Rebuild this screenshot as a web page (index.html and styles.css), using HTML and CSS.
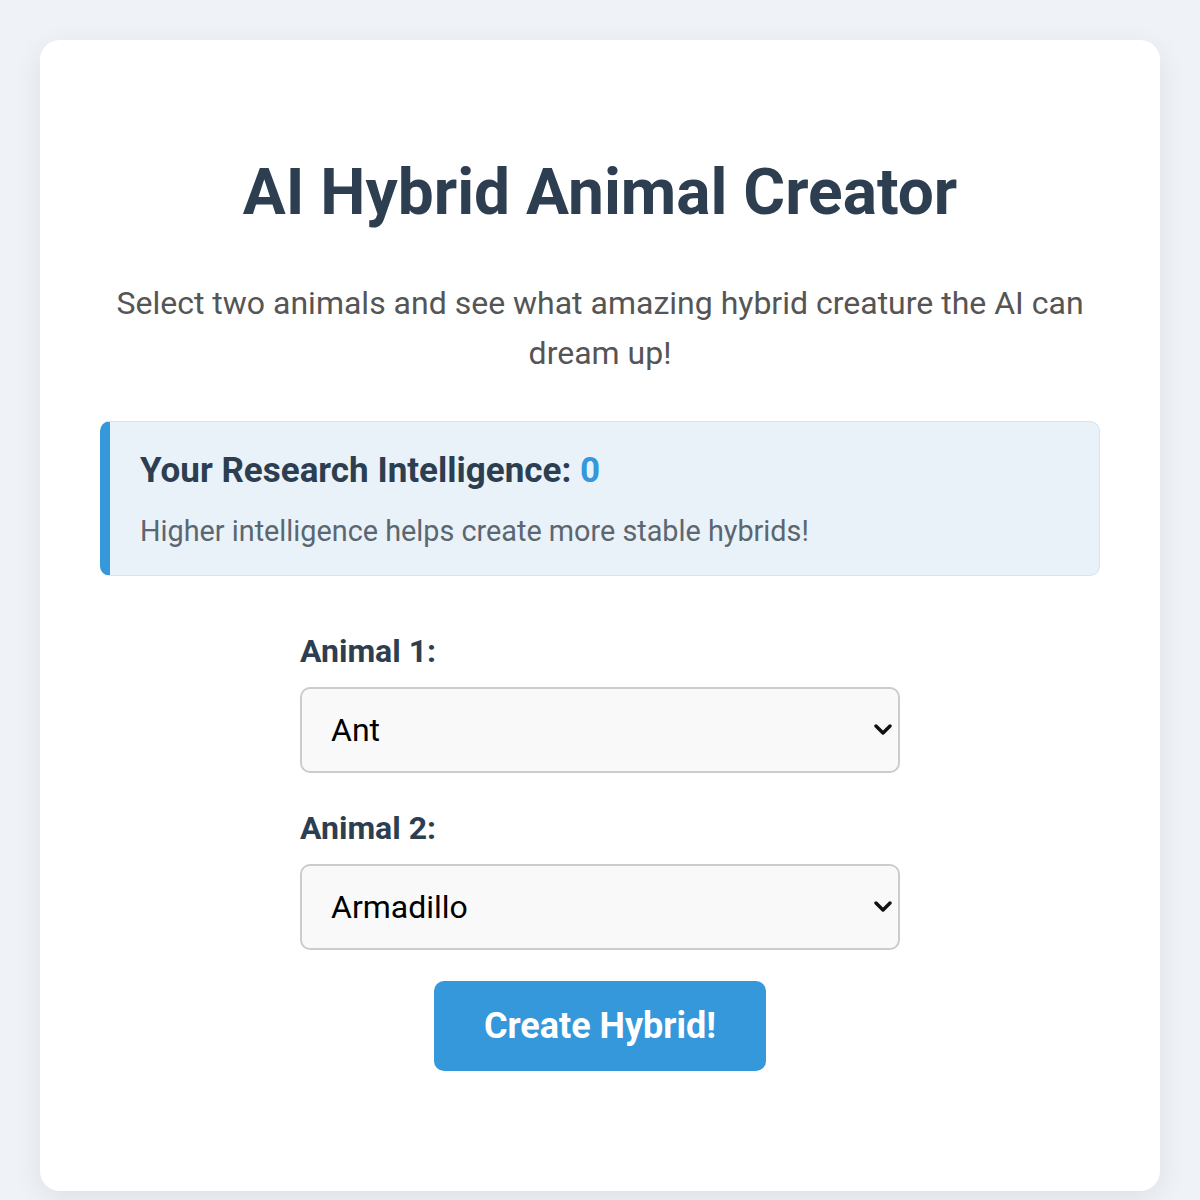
FILE: index.html
```html
<!DOCTYPE html>
<html lang="en">
<head>
  <meta charset="UTF-8">
  <title>AI Hybrid Animal Creator</title>
  <link rel="stylesheet" href="styles.css">
</head>
<body>

  <div class="card">
    <h1>AI Hybrid Animal Creator</h1>
    <p class="subtitle">Select two animals and see what amazing hybrid creature the AI can dream up!</p>

    <div class="intel-box">
      <h3>Your Research Intelligence: <span class="intel-value">0</span></h3>
      <p>Higher intelligence helps create more stable hybrids!</p>
    </div>

    <form id="hybridForm">
      <label for="animal1">Animal 1:</label>
      <div class="select-wrap">
        <select id="animal1">
          <option>Ant</option>
          <option>Armadillo</option>
          <option>Bear</option>
          <option>Cat</option>
        </select>
        <svg class="chevron" width="18" height="12" viewBox="0 0 18 12"><polyline points="2,2 9,9 16,2" fill="none" stroke="#111" stroke-width="3.4" stroke-linecap="round" stroke-linejoin="round"/></svg>
      </div>

      <label for="animal2">Animal 2:</label>
      <div class="select-wrap">
        <select id="animal2">
          <option>Ant</option>
          <option selected>Armadillo</option>
          <option>Bear</option>
          <option>Cat</option>
        </select>
        <svg class="chevron" width="18" height="12" viewBox="0 0 18 12"><polyline points="2,2 9,9 16,2" fill="none" stroke="#111" stroke-width="3.4" stroke-linecap="round" stroke-linejoin="round"/></svg>
      </div>

      <button type="submit">Create Hybrid!</button>
    </form>
  </div>

</body>
</html>
```

FILE: styles.css
```css
body {
  margin: 0;
  padding: 40px;
  font-family: Roboto, 'Liberation Sans', sans-serif;
  background-color: #eff3f7;
}

.card {
  background: #fff;
  border-radius: 20px;
  box-shadow: 0 8px 30px rgba(0,0,0,0.08);
  padding: 60px 60px 120px;
  text-align: center;
}

h1 {
  font-size: 64px;
  font-weight: 700;
  color: #2c3e50;
  margin: 55px 0 48px;
}

.subtitle {
  font-size: 32px;
  line-height: 50px;
  color: #555;
  margin: 0 0 43px;
}

.intel-box {
  text-align: left;
  background-color: #e9f2f9;
  border: 1px solid #d3e5f0;
  border-left: 10px solid #3498db;
  border-radius: 10px;
  padding: 28px 30px 27px;
}

.intel-box h3 {
  font-size: 35px;
  font-weight: 700;
  color: #2c3e50;
  margin: 0 0 23px;
}

.intel-value {
  color: #3498db;
}

.intel-box p {
  font-size: 28.8px;
  color: #5b6670;
  margin: 0;
}

form {
  width: 600px;
  margin: 56px auto 0;
  text-align: left;
}

form label {
  display: block;
  font-size: 32px;
  font-weight: 700;
  color: #2c3e50;
  margin-bottom: 17px;
}

.select-wrap {
  position: relative;
  margin-bottom: 36px;
}

.select-wrap:last-of-type {
  margin-bottom: 31px;
}

select {
  appearance: none;
  -webkit-appearance: none;
  width: 100%;
  height: 86px;
  padding: 0 29px;
  font-family: Roboto, 'Liberation Sans', sans-serif;
  font-size: 32px;
  color: #000;
  background-color: #f9f9f9;
  border: 2px solid #ccc;
  border-radius: 10px;
}

.chevron {
  position: absolute;
  right: 8px;
  top: 37px;
  pointer-events: none;
}

form button {
  display: block;
  margin: 0 auto;
  background-color: #3498db;
  color: #fff;
  border: none;
  border-radius: 10px;
  font-family: Roboto, 'Liberation Sans', sans-serif;
  font-size: 36px;
  font-weight: 700;
  padding: 24px 50px;
  cursor: pointer;
}
```
